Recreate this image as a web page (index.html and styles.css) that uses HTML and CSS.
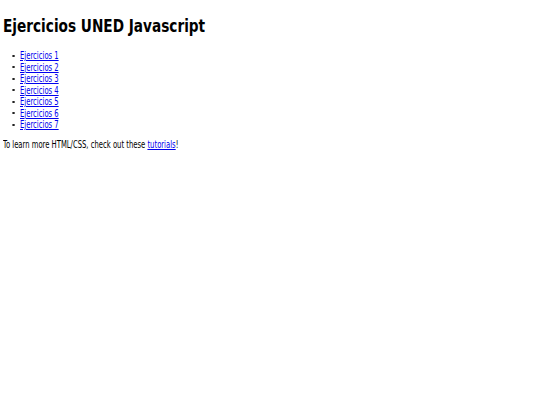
FILE: index.html
```html
<!DOCTYPE html>
<html>
<head>
<meta charset="utf-8">
<title>Ejercicios UNED Javascript</title>
<link rel="stylesheet" href="styles.css">
</head>
<body>
<h1 class="title">Ejercicios UNED Javascript</h1>
<ul class="list">
<li class="item"><a href="#">Ejercicios 1</a></li>
<li class="item"><a href="#">Ejercicios 2</a></li>
<li class="item"><a href="#">Ejercicios 3</a></li>
<li class="item"><a href="#">Ejercicios 4</a></li>
<li class="item"><a href="#">Ejercicios 5</a></li>
<li class="item"><a href="#">Ejercicios 6</a></li>
<li class="item"><a href="#">Ejercicios 7</a></li>
</ul>
<p class="note">To learn more HTML/CSS, check out these <a href="#">tutorials</a>!</p>
</body>
</html>
```
FILE: styles.css
```css
body {
  margin: 3px;
  font-family: "DejaVu Sans Condensed", "DejaVu Sans", sans-serif;
  font-size: 10px;
  line-height: 11.5px;
  color: #000;
  background: #fff;
}
.title {
  font-size: 17px;
  line-height: 20px;
  font-weight: bold;
  margin: 13px 0 14px;
  transform: scaleX(0.893);
  transform-origin: left center;
}
.list {
  list-style: none;
  margin: 0 0 8.5px;
  padding-left: 17px;
}
.item {
  transform: scaleX(0.76);
  transform-origin: left center;
}
.item::before {
  content: "";
  display: inline-block;
  width: 2.6px;
  height: 2px;
  margin-left: -10px;
  margin-right: 7.4px;
  vertical-align: 2.3px;
  background: #222;
}
.list a, .note a {
  color: #0000ee;
}
.note {
  margin: 0;
  transform: scaleX(0.76);
  transform-origin: left center;
}
```
